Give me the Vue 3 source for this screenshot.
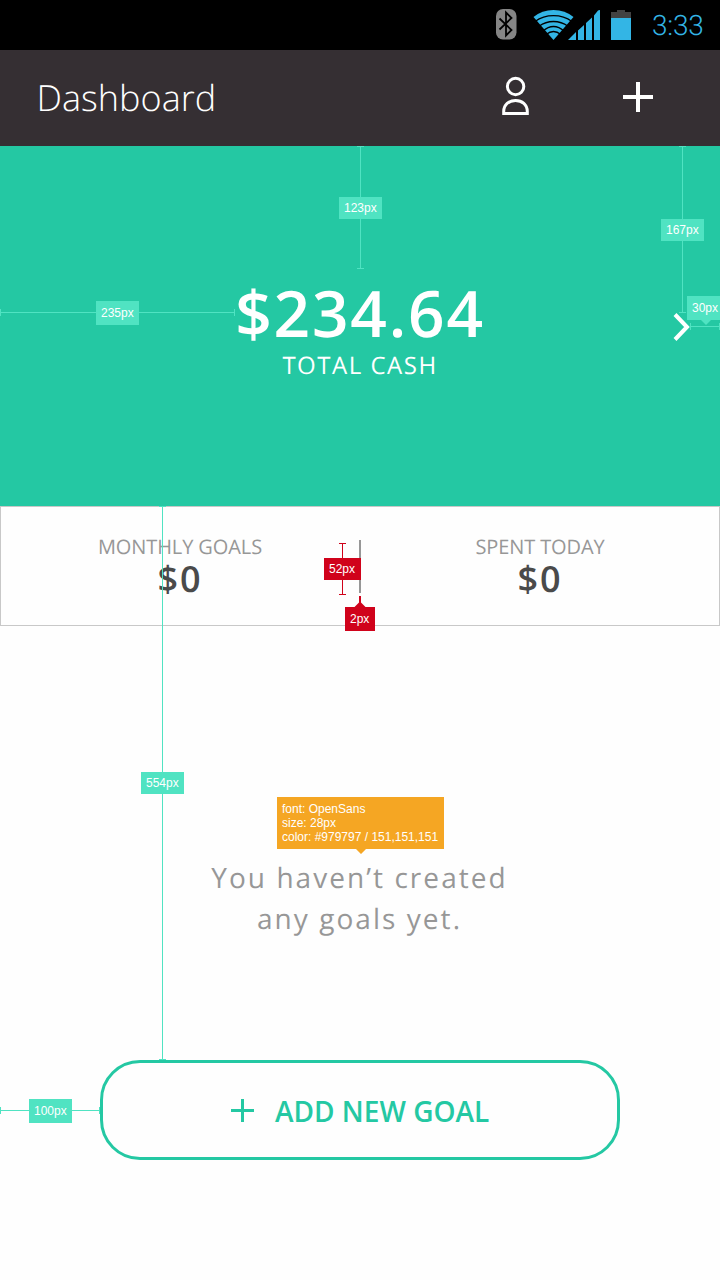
<script setup>
const mint = '#50e3c2'
const red = '#d0021b'

const lines = [
  { x: 360, y: 146, w: 1, h: 123, c: mint },
  { x: 682, y: 146, w: 1, h: 167, c: mint },
  { x: 0, y: 312, w: 235, h: 1, c: mint },
  { x: 690, y: 326, w: 30, h: 1, c: mint },
  { x: 162, y: 506, w: 1, h: 554, c: mint },
  { x: 0, y: 1110, w: 100, h: 1, c: mint },
  { x: 342, y: 543, w: 1, h: 52, c: red },
]

const caps = lines.flatMap((l) =>
  l.w === 1
    ? [
        { x: l.x - 3, y: l.y, w: 7, h: 1, c: l.c },
        { x: l.x - 3, y: l.y + l.h - 1, w: 7, h: 1, c: l.c },
      ]
    : [
        { x: l.x, y: l.y - 3, w: 1, h: 7, c: l.c },
        { x: l.x + l.w - 1, y: l.y - 3, w: 1, h: 7, c: l.c },
      ]
)

const labels = [
  { x: 339, y: 197, w: 43, h: 22, c: mint, t: '123px' },
  { x: 661, y: 219, w: 43, h: 22, c: mint, t: '167px' },
  { x: 96, y: 301, w: 43, h: 24, c: mint, t: '235px' },
  { x: 687, y: 296, w: 36, h: 24, c: mint, t: '30px' },
  { x: 141, y: 772, w: 43, h: 22, c: mint, t: '554px' },
  { x: 29, y: 1099, w: 43, h: 24, c: mint, t: '100px' },
  { x: 324, y: 558, w: 37, h: 22, c: red, t: '52px' },
  { x: 345, y: 607, w: 30, h: 24, c: red, t: '2px' },
]
</script>

<template>
  <div class="screen">
    <div class="status">
      <svg width="140" height="50" viewBox="492 0 140 50">
        <rect x="496" y="9" width="20.5" height="30.5" rx="7" fill="#858585" />
        <path d="M499.500 18.500L511.500 30L506 35.500V12.500L511.500 18L499.500 29.500" fill="none" stroke="#000" stroke-width="1.8" />
        <path d="M553.500 40L533.500 17Q542 10 553.500 10T573.500 17Z" fill="#33b5e5" />
        <g fill="none" stroke="#000" stroke-width="1.3">
          <path d="M535 21.500Q543 15.700 553.500 15.700T572 21.500" />
          <path d="M539 26.200Q545.500 21.500 553.500 21.500T568 26.200" />
          <path d="M543 31Q548 26.500 553.500 26.500T564 31" />
          <path d="M546 34.500Q550 31.500 553.500 31.500T561 34.500" />
        </g>
        <path d="M568 40L576 32V40ZM578 40V30.500L584 25V40ZM586 40V23L592 17.500V40ZM594 40V15.500L598 10.500Q598.500 10 600 10V40Z" fill="#33b5e5" />
        <path d="M611 18V12H617V10H625V12H631V18Z" fill="#424242" />
        <rect x="611" y="18" width="20" height="22" fill="#33b5e5" />
      </svg>
      <span class="time">3:33</span>
    </div>

    <header class="bar">
      <h1>Dashboard</h1>
      <svg class="user" width="28" height="40" viewBox="0 0 28 40" fill="none" stroke="#fff" stroke-width="3">
        <circle cx="13.600" cy="10.500" r="8.200" />
        <path d="M1.700 37.500V35.500C1.700 28.500 7 24.500 13.500 24.500S25.300 28.500 25.300 35.500V37.500Z" />
      </svg>
      <svg class="plus" width="30" height="30" viewBox="0 0 30 30" fill="#fff">
        <path d="M13 0H17V13H30V17H17V30H13V17H0V13H13Z" />
      </svg>
    </header>

    <section class="cash">
      <div class="amount">$234.64</div>
      <div class="caption">TOTAL CASH</div>
      <svg class="next" width="18" height="28" viewBox="0 0 18 28">
        <path d="M2 1.500L14 14L2 26.500" fill="none" stroke="#fff" stroke-width="4" />
      </svg>
    </section>

    <section class="stats">
      <div class="stat monthly">
        <div class="name">MONTHLY GOALS</div>
        <div class="value">$0</div>
      </div>
      <div class="divider"></div>
      <div class="stat">
        <div class="name">SPENT TODAY</div>
        <div class="value">$0</div>
      </div>
    </section>

    <section class="empty">
      <p>You haven’t created<br />any goals yet.</p>
    </section>

    <button class="add">
      <svg width="23" height="23" viewBox="0 0 23 23" fill="#24c8a3">
        <path d="M10 0H13V10H23V13H13V23H10V13H0V10H10Z" />
      </svg>
      <span>ADD NEW GOAL</span>
    </button>

    <svg class="notes" width="720" height="1280" viewBox="0 0 720 1280">
      <rect v-for="(l, i) in [...lines, ...caps]" :key="i" :x="l.x" :y="l.y" :width="l.w" :height="l.h" :fill="l.c" />
      <path d="M701 320H711L706 325Z" :fill="mint" />
      <path d="M354.500 607L359 602.500V596H361V602.500L365.500 607Z" :fill="red" />
      <g v-for="l in labels" :key="l.t">
        <rect :x="l.x" :y="l.y" :width="l.w" :height="l.h" :fill="l.c" />
        <text :x="l.x + 5" :y="l.h === 24 ? l.y + 16 : l.y + 15">{{ l.t }}</text>
      </g>
      <path d="M277 797H444V849H366L361 854L356 849H277Z" fill="#f5a623" />
      <text x="282" y="813">font: OpenSans</text>
      <text x="282" y="827">size: 28px</text>
      <text x="282" y="841">color: #979797 / 151,151,151</text>
    </svg>
  </div>
</template>

<style>
body {
  margin: 0;
  background: #fefefe;
}
</style>

<style scoped>
.screen {
  position: relative;
  width: 720px;
  height: 1280px;
  overflow: hidden;
  background: #fefefe;
  font-family: 'Open Sans', 'Noto Sans', sans-serif;
  text-rendering: geometricPrecision;
  display: flex;
  flex-direction: column;
}
.status {
  height: 50px;
  background: #000;
  display: flex;
  align-items: center;
  padding-left: 492px;
  box-sizing: border-box;
}
.time {
  margin-left: 20px;
  padding-top: 2px;
  font: 300 28px/48px Roboto, sans-serif;
  letter-spacing: -0.2px;
  color: #33b5e5;
}
.bar {
  height: 96px;
  box-sizing: border-box;
  background: #352f33;
  display: flex;
  align-items: center;
  padding: 0 67px 0 36.6px;
}
.bar h1 {
  margin: 0;
  flex: 1;
  font-size: 36px;
  line-height: 96px;
  font-weight: 300;
  letter-spacing: 0;
  color: #fff;
}
.user {
  margin-right: 93px;
  margin-bottom: 4px;
}
.plus {
  margin-bottom: 2px;
}
.cash {
  position: relative;
  height: 360px;
  box-sizing: border-box;
  padding-top: 127px;
  background: #24c8a3;
  color: #fff;
  text-align: center;
}
.amount {
  font-size: 64px;
  line-height: 80px;
  font-weight: 600;
  letter-spacing: 1.8px;
}
.caption {
  font-size: 24px;
  line-height: 26px;
  letter-spacing: 1.5px;
}
.next {
  position: absolute;
  left: 673px;
  top: 166.5px;
}
.stats {
  height: 120px;
  box-sizing: border-box;
  border: 1px solid #c8c8c8;
  display: flex;
}
.divider {
  width: 2px;
  height: 53px;
  margin-top: 32.5px;
  background: #979797;
}
.stat {
  flex: 1;
  padding-top: 26px;
  text-align: center;
}
.monthly {
  padding-right: 2px;
  margin-right: -2px;
}
.name {
  font-size: 20px;
  line-height: 28px;
  letter-spacing: -0.1px;
  color: #979797;
}
.value {
  font-size: 36px;
  line-height: 36px;
  font-weight: 600;
  letter-spacing: 2px;
  color: #4a4a4a;
}
.empty {
  height: 434px;
  box-sizing: border-box;
  padding: 232px 1px 0 0;
  text-align: center;
}
.empty p {
  margin: 0;
  font-size: 28px;
  line-height: 41px;
  letter-spacing: 2.05px;
  color: #979797;
}
.add {
  width: 520px;
  height: 100px;
  margin: 0 auto;
  padding: 0 0 0 128px;
  border: 3px solid #24c8a3;
  border-radius: 40px;
  background: transparent;
  display: flex;
  align-items: center;
  gap: 21px;
  font: 600 28px/38px 'Open Sans', sans-serif;
  color: #24c8a3;
}
.add span {
  padding-top: 1px;
}
.notes {
  position: absolute;
  left: 0;
  top: 0;
  text-rendering: auto;
}
.notes text {
  font: 12px 'Liberation Sans', Arial, sans-serif;
  fill: #fff;
}
</style>
